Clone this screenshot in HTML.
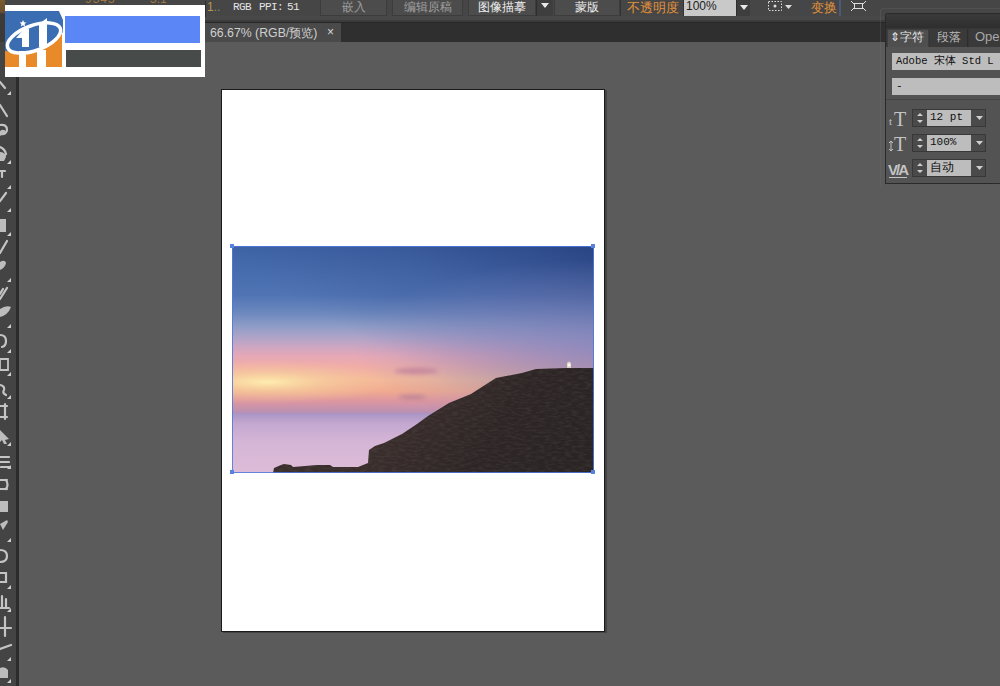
<!DOCTYPE html>
<html><head><meta charset="utf-8">
<style>
*{margin:0;padding:0;box-sizing:border-box}
html,body{width:1000px;height:686px;overflow:hidden;background:#5b5b5b;font-family:"Liberation Sans",sans-serif}
.a{position:absolute}
.btn{position:absolute;top:0;height:16px;background:#4c4c4c;border:1px solid #3c3c3c;border-top:none;color:#eee;font-size:12px;line-height:15px;text-align:center;white-space:nowrap}
.dis{color:#a0a0a0}
.dd{position:absolute;top:0;height:16px;background:#3e3e3e;border-left:1px solid #2e2e2e}
.tri{position:absolute;width:0;height:0;border-left:4px solid transparent;border-right:4px solid transparent;border-top:5px solid #e8e8e8}
.mono{font-family:"Liberation Mono",monospace}
</style></head><body>
<!-- top control bar -->
<div class="a" style="left:0;top:0;width:1000px;height:16px;background:#464646"></div>
<div class="a" style="left:0;top:16px;width:1000px;height:4px;background:#484848"></div>
<div class="a" style="left:0;top:20px;width:1000px;height:2px;background:#3c3c3c"></div>
<div class="a" style="left:0;top:22px;width:1000px;height:1px;background:#262626"></div>
<!-- tab bar -->
<div class="a" style="left:0;top:23px;width:1000px;height:19px;background:#2f2f2f"></div>
<div class="a" style="left:200px;top:23px;width:141px;height:19px;background:#4a4a4a"></div>
<div class="a" style="left:210px;top:25px;font-size:12.3px;line-height:16px;color:#cfcfcf;white-space:nowrap">66.67% (RGB/预览)</div>
<div class="a" style="left:327px;top:25px;font-size:12px;line-height:15px;color:#d8d8d8">×</div>

<!-- control bar items -->
<div class="a" style="left:0;top:0;width:5px;height:77px;background:linear-gradient(#7a5a30 0,#6a5030 12px,#3e3a36 14px,#3a3a3a 55px,#50607a 62px,#3a3a3a 70px)"></div>
<div class="a" style="left:85px;top:-8px;font-size:12px;color:#a07840;letter-spacing:1px">9345</div>
<div class="a" style="left:150px;top:-8px;font-size:12px;color:#a07840">5.1</div>
<div class="a" style="left:207px;top:1px;font-size:12px;line-height:13px;color:#b89450;white-space:pre">1<span style="color:#8a8a60">..</span></div>
<div class="a" style="left:205px;top:1px;width:1px;height:16px;background:#2e2e2e"></div>
<div class="a" style="left:620px;top:0;width:1px;height:16px;background:#333"></div>
<div class="a" style="left:683px;top:0;width:1px;height:16px;background:#333"></div>
<div class="a mono" style="left:233px;top:1px;font-size:11px;line-height:13px;color:#e4e4e4;white-space:pre;letter-spacing:-0.6px">RGB</div>
<div class="a mono" style="left:259px;top:1px;font-size:11px;line-height:13px;color:#e4e4e4;white-space:pre;letter-spacing:-0.6px">PPI:</div>
<div class="a mono" style="left:287px;top:1px;font-size:11px;line-height:13px;color:#e4e4e4;white-space:pre;letter-spacing:-0.6px">51</div>
<div class="btn dis" style="left:320px;width:67px">嵌入</div>
<div class="btn dis" style="left:392px;width:71px">编辑原稿</div>
<div class="btn" style="left:468px;width:68px">图像描摹</div>
<div class="dd" style="left:536px;width:17px"><div class="tri" style="left:4px;top:3px"></div></div>
<div class="btn" style="left:554px;width:66px">蒙版</div>
<div class="a" style="left:627px;top:0;font-size:13px;line-height:15px;color:#e3923a;white-space:nowrap">不透明度</div>
<div class="a" style="left:684px;top:0;width:52px;height:16px;background:#c9c9c9;font-size:12px;line-height:13px;color:#222;padding-left:2px" >100%</div>
<div class="dd" style="left:736px;width:14px"><div class="tri" style="left:3px;top:5px"></div></div>
<svg class="a" style="left:766px;top:0" width="30" height="14">
 <rect x="2.5" y="1.5" width="13" height="9" fill="none" stroke="#ddd" stroke-dasharray="1.5 1.5"/>
 <circle cx="9" cy="6" r="1.5" fill="#ddd"/>
 <path d="M19 5 h7 l-3.5 4z" fill="#ddd"/>
</svg>
<div class="a" style="left:803px;top:0;width:1px;height:16px;background:#3a4a5a"></div>
<div class="a" style="left:811px;top:0;font-size:13px;line-height:15px;color:#e3923a;white-space:nowrap">变换</div>
<div class="a" style="left:839px;top:0;width:2px;height:16px;background:#4a5a7a"></div>
<svg class="a" style="left:850px;top:0" width="18" height="14">
 <rect x="4.5" y="3.5" width="8" height="5" fill="none" stroke="#ddd"/>
 <path d="M1 1l3 3M16 1l-3 3M1 11l3-3M16 11l-3-3" stroke="#ddd"/>
</svg>

<!-- left tools -->
<div class="a" style="left:0;top:42px;width:16px;height:644px;background:#444"></div>
<div class="a" style="left:16px;top:42px;width:3px;height:644px;background:#2c2c2c"></div>
<svg class="a" style="left:0;top:77px" width="16" height="609" viewBox="0 77 16 609">
 <g fill="#cfcfcf">
  <path d="M7 95 l4 -4 v4z M7 164 l4 -4 v4z M7 189 l4 -4 v4z M7 212 l4 -4 v4z M7 236 l4 -4 v4z M7 282 l4 -4 v4z M7 328 l4 -4 v4z M7 353 l4 -4 v4z M7 376 l4 -4 v4z M7 399 l4 -4 v4z M7 446 l4 -4 v4z M7 469 l4 -4 v4z M7 542 l4 -4 v4z M7 589 l4 -4 v4z M7 612 l4 -4 v4z M7 661 l4 -4 v4z M7 683 l4 -4 v4z"/>
 </g>
 <g fill="none" stroke="#c4c4c4" stroke-width="2.2" stroke-linecap="round">
  <path d="M0 82 l5 6"/>
  <path d="M0 105 l7 11"/>
  <path d="M0 125 q7 -1 7 5 q-1 5 -7 4"/>
  <path d="M0 147 q5 2 6 7 l-5 5"/>
  <path d="M0 171 h5 M2 171 v6"/>
  <path d="M0 201 l6 -8"/>
  <path d="M0 253 l7 -12"/>
  <path d="M0 299 l7 -11 M0 294 l3 -5"/>
  <path d="M0 335 q6 0 6 6 q0 5 -4 6"/>
  <path d="M0 385 q5 1 4 5 q-2 3 2 5"/>
  <path d="M0 406 h7 M0 417 h7 M5 404 v15"/>
  <path d="M0 457 h9 M0 462 h9 M1 467 h9"/>
  <path d="M0 480 h7 M0 489 h7 M6 480 q3 5 0 9"/>
  <path d="M0 550 q7 0 7 6 q0 6 -7 6"/>
  <path d="M0 573 h6 v9 h-6"/>
  <path d="M2 596 v11 M6 599 v8 M0 608 h9"/>
  <path d="M0 628 h11 M5 617 v19"/>
  <path d="M0 649 l11 -4"/>
 </g>
 <g fill="#bdbdbd">
  <path d="M0 131 q4 -3 6 1 l-6 4z"/>
  <path d="M0 152 q5 0 6 5 l-2 4 h-4z"/>
  <rect x="0" y="219" width="6" height="13"/>
  <path d="M0 262 q5 -3 6 1 q-1 5 -6 7z"/>
  <path d="M0 309 q6 -4 11 -2 q-3 8 -11 10z"/>
  <path d="M0 359 h8 v11 h-8z" fill="none" stroke="#c4c4c4" stroke-width="1.8"/>
  <path d="M0 430 l9 9 l-4 1 l2 4 h-3 l-2 -4 l-2 2z"/>
  <rect x="0" y="501" width="8" height="11"/>
  <path d="M0 524 l7 -4 l1 2 l-5 8z"/>
  <path d="M0 668 q5 -2 8 2 v8 h-8z"/>
 </g>
</svg>

<!-- artboard -->
<div class="a" style="left:221px;top:89px;width:384px;height:543px;background:#fff;border:1px solid #1a1a1a;box-shadow:2px 1px 0 #444"></div>

<!-- photo -->
<svg class="a" style="left:232px;top:246px" width="362" height="227" viewBox="0 0 362 227">
 <defs>
  <linearGradient id="sky" x1="0" y1="0" x2="0" y2="167" gradientUnits="userSpaceOnUse">
   <stop offset="0" stop-color="#3e64a6"/>
   <stop offset="0.295" stop-color="#5074b4"/>
   <stop offset="0.40" stop-color="#6c88be"/>
   <stop offset="0.48" stop-color="#8e9cc6"/>
   <stop offset="0.55" stop-color="#b0a4c8"/>
   <stop offset="0.61" stop-color="#d0a6c0"/>
   <stop offset="0.66" stop-color="#e6a8b6"/>
   <stop offset="0.72" stop-color="#f0aca8"/>
   <stop offset="0.80" stop-color="#f4b898"/>
   <stop offset="0.87" stop-color="#f0aa90"/>
   <stop offset="0.93" stop-color="#dc96a0"/>
   <stop offset="1" stop-color="#b890b4"/>
  </linearGradient>
  <linearGradient id="cliff" x1="200" y1="130" x2="330" y2="227" gradientUnits="userSpaceOnUse">
   <stop offset="0" stop-color="#3a2e2c"/>
   <stop offset="0.5" stop-color="#2e2626"/>
   <stop offset="1" stop-color="#2a2424"/>
  </linearGradient>
  <radialGradient id="rb" cx="362" cy="100" r="240" gradientUnits="userSpaceOnUse" gradientTransform="translate(362 100) scale(1 0.36) translate(-362 -100)">
   <stop offset="0" stop-color="#8a8cc4" stop-opacity="0.7"/>
   <stop offset="0.5" stop-color="#8a8cc4" stop-opacity="0.35"/>
   <stop offset="1" stop-color="#8a8cc4" stop-opacity="0"/>
  </radialGradient>
  <filter id="tex" x="0" y="0" width="100%" height="100%">
   <feTurbulence type="fractalNoise" baseFrequency="0.15 0.5" numOctaves="2" seed="3"/>
   <feColorMatrix values="0 0 0 0 0.35  0 0 0 0 0.3  0 0 0 0 0.28  0 0 0 0.9 -0.35"/>
   <feComposite in2="SourceGraphic" operator="in"/>
  </filter>
  <filter id="bl" x="-50%" y="-200%" width="200%" height="500%"><feGaussianBlur stdDeviation="2"/></filter>
  <linearGradient id="dark" x1="362" y1="0" x2="260" y2="170" gradientUnits="userSpaceOnUse">
   <stop offset="0" stop-color="#182a66" stop-opacity="0.55"/>
   <stop offset="0.55" stop-color="#243474" stop-opacity="0.2"/>
   <stop offset="1" stop-color="#2a3a78" stop-opacity="0"/>
  </linearGradient>
  <linearGradient id="water" x1="0" y1="167" x2="0" y2="227" gradientUnits="userSpaceOnUse">
   <stop offset="0" stop-color="#a894c4"/>
   <stop offset="0.18" stop-color="#c4a8d0"/>
   <stop offset="0.5" stop-color="#d6b6d6"/>
   <stop offset="1" stop-color="#dcbcd8"/>
  </linearGradient>
  <radialGradient id="sun" cx="35" cy="136" r="130" gradientUnits="userSpaceOnUse" gradientTransform="translate(35 136) scale(1 0.17) translate(-35 -136)">
   <stop offset="0" stop-color="#fff0b0" stop-opacity="0.95"/>
   <stop offset="0.45" stop-color="#f8d8a0" stop-opacity="0.5"/>
   <stop offset="1" stop-color="#f8c8a0" stop-opacity="0"/>
  </radialGradient>
 </defs>
 <rect width="362" height="227" fill="url(#sky)"/>
 <rect width="362" height="227" fill="url(#dark)"/>
 <rect width="362" height="167" fill="url(#rb)"/>
 <rect x="0" y="0" width="362" height="167" fill="url(#sun)"/>
 <rect x="0" y="167" width="362" height="60" fill="url(#water)"/>
 <ellipse cx="184" cy="125" rx="22" ry="3" fill="#b87898" opacity="0.7" filter="url(#bl)"/>
 <ellipse cx="180" cy="151" rx="14" ry="2" fill="#a07090" opacity="0.6" filter="url(#bl)"/>
 <path d="M41 227 L42 222 L49 219 L52 218 L59 219 L61 221 L85 219 L98 219 L101 221 L126 221 L136 217 L137 204 L143 200 L152 197 L170 188 L185 178 L196 170 L217 157 L239 148 L253 139 L264 132 L290 127 L304 123 L335 122 L362 122 L362 227 Z" fill="url(#cliff)"/>
 <path d="M41 227 L42 222 L49 219 L52 218 L59 219 L61 221 L85 219 L98 219 L101 221 L126 221 L136 217 L137 204 L143 200 L152 197 L170 188 L185 178 L196 170 L217 157 L239 148 L253 139 L264 132 L290 127 L304 123 L335 122 L362 122 L362 227 Z" fill="#000" filter="url(#tex)" opacity="0.3"/>
 <path d="M335 122 v-5 q2 -3 4 0 v5z" fill="#d8d4c8"/>
 <circle cx="337" cy="119" r="1.5" fill="#fffbe8"/>
</svg>
<!-- selection -->
<div class="a" style="left:232px;top:246px;width:362px;height:227px;border:1px solid rgba(80,120,220,0.85)"></div>
<div class="a" style="left:230px;top:244px;width:4px;height:4px;background:#5a80e0"></div>
<div class="a" style="left:591px;top:244px;width:4px;height:4px;background:#5a80e0"></div>
<div class="a" style="left:230px;top:470px;width:4px;height:4px;background:#5a80e0"></div>
<div class="a" style="left:591px;top:470px;width:4px;height:4px;background:#5a80e0"></div>

<!-- overlay logo -->
<div class="a" style="left:5px;top:5px;width:200px;height:72px;background:#fff"></div>
<svg class="a" style="left:0;top:0" width="70" height="80" viewBox="0 0 70 80">
 <rect x="5" y="11" width="57" height="56" fill="#e8892a"/>
 <path d="M5 11 H59 L63 19 V32 Q52 46 32 50 Q16 52 5 51 Z" fill="#3b6db3"/>
 <ellipse cx="34" cy="38" rx="28" ry="12.5" transform="rotate(-20 34 38)" fill="#3b6db3" stroke="#fff" stroke-width="3.5"/>
 <path d="M59 11 H64 V22 Z" fill="#fff"/>
 <path d="M16 38 L24 29 L29 29 L29 47 L22 47 L22 38 Z" fill="#fff"/>
 <path d="M39 24 L47 18 L47 47 L39 47 Z" fill="#fff"/>
 <rect x="19" y="51" width="7" height="16" fill="#fff"/>
 <rect x="37" y="50" width="9" height="17" fill="#fff"/>
 <path d="M23 20 l1 2.2 2.4 .3 -1.8 1.6 .5 2.4 -2.1 -1.2 -2.1 1.2 .5 -2.4 -1.8 -1.6 2.4 -.3z" fill="#fff"/>
</svg>
<div class="a" style="left:65px;top:16px;width:135px;height:27px;background:#5b86f5"></div>
<div class="a" style="left:66px;top:50px;width:135px;height:17px;background:#474b4a"></div>

<!-- right panel -->
<div class="a" style="left:880px;top:8px;width:120px;height:179px;border-left:1px solid rgba(110,110,110,0.3);border-top:1px solid rgba(110,110,110,0.3);border-top-left-radius:4px"></div>
<div class="a" style="left:885px;top:13px;width:115px;height:171px;background:#535353;border-left:1px solid #2a2a2a;border-top:1px solid #2a2a2a;border-bottom:1px solid #2a2a2a;border-top-left-radius:3px;overflow:hidden">
 <div class="a" style="left:0;top:0;width:114px;height:14px;background:linear-gradient(#3a3a3a,#2e2e2e)"></div>
 <div class="a" style="left:0;top:14px;width:114px;height:19px;background:#363636"></div>
 <div class="a" style="left:1px;top:15px;width:42px;height:18px;background:#4f4f4f;border:1px solid #3e3e3e;border-bottom:none"></div>
 <div class="a" style="left:44px;top:15px;width:38px;height:18px;background:#3a3a3a;border-right:1px solid #2c2c2c"></div>
 <div class="a" style="left:83px;top:15px;width:40px;height:18px;background:#3a3a3a"></div>
</div>
<div class="a" style="left:887px;top:28px;width:42px;height:18px;color:#e8e8e8;font-size:12px;line-height:18px;padding-left:3px;white-space:nowrap">⇕字符</div>
<div class="a" style="left:937px;top:28px;color:#b8b8b8;font-size:12px;line-height:18px;white-space:nowrap">段落</div>
<div class="a" style="left:975px;top:28px;color:#a8a8a8;font-size:13px;line-height:18px;white-space:nowrap">Ope</div>
<div class="a mono" style="left:892px;top:53px;width:108px;height:17px;background:#bdbdbd;color:#111;font-size:10.5px;line-height:17px;padding-left:4px;white-space:pre">Adobe 宋体 Std L</div>
<div class="a mono" style="left:892px;top:78px;width:108px;height:17px;background:#bdbdbd;color:#111;font-size:11px;line-height:16px;padding-left:4px">-</div>
<div class="a" style="left:886px;top:99px;width:114px;height:1px;background:#454545"></div>
<!-- rows -->
<svg class="a" style="left:886px;top:104px" width="26" height="78" viewBox="0 0 26 78">
 <g fill="#c4c4c4" font-family="Liberation Serif">
  <text x="3" y="21" font-size="11">t</text><text x="8" y="22" font-size="20">T</text>
  <path d="M5 37v10M3 39l2-2 2 2M3 45l2 2 2-2" stroke="#c4c4c4" fill="none" stroke-width="1"/><text x="8" y="47" font-size="20">T</text>
  <text x="2" y="71" font-size="15" font-family="Liberation Sans" font-weight="bold" letter-spacing="-2">V/A</text>
  <rect x="3" y="73" width="18" height="1"/>
 </g>
</svg>
<div class="a" style="left:912px;top:109px;width:74px;height:18px;background:#4a4a4a;border:1px solid #383838"></div>
<div class="a" style="left:912px;top:134px;width:74px;height:18px;background:#4a4a4a;border:1px solid #383838"></div>
<div class="a" style="left:912px;top:159px;width:74px;height:18px;background:#4a4a4a;border:1px solid #383838"></div>
<div class="a mono" style="left:927px;top:110px;width:44px;height:16px;background:#bdbdbd;color:#111;font-size:11px;line-height:15px;padding-left:3px;white-space:pre">12 pt</div>
<div class="a mono" style="left:927px;top:135px;width:44px;height:16px;background:#bdbdbd;color:#111;font-size:11px;line-height:15px;padding-left:3px">100%</div>
<div class="a" style="left:927px;top:160px;width:44px;height:16px;background:#bdbdbd;color:#111;font-size:12px;line-height:15px;padding-left:3px">自动</div>
<svg class="a" style="left:912px;top:109px" width="74" height="70">
 <g fill="#cfcfcf">
  <path d="M5 7 h6 l-3 -3z M5 11 h6 l-3 3z"/>
  <path d="M5 32 h6 l-3 -3z M5 36 h6 l-3 3z"/>
  <path d="M5 57 h6 l-3 -3z M5 61 h6 l-3 3z"/>
  <path d="M64 7 h7 l-3.5 4z M64 32 h7 l-3.5 4z M64 57 h7 l-3.5 4z"/>
 </g>
</svg>

</body></html>
